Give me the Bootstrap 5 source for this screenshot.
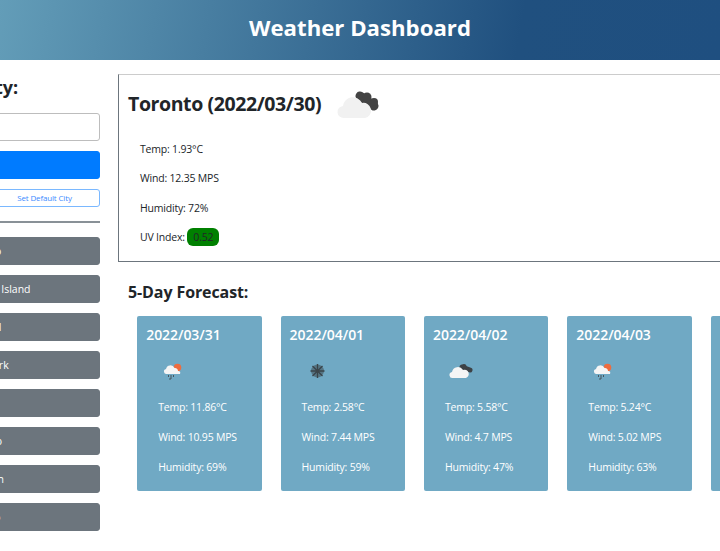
<!DOCTYPE html>
<html lang="en">
<head>
    <meta charset="UTF-8">
    <meta name="viewport" content="width=device-width, initial-scale=1.0">
    <title>Weather Dashboard</title>
    <link href="https://cdn.jsdelivr.net/npm/bootstrap@5.3.2/dist/css/bootstrap.min.css" rel="stylesheet">
    <style>
        html, body { overflow: hidden; height: 551px; }
        body { font-family: "Open Sans", "Noto Sans", sans-serif; color: #212529; font-size: 10.5px; letter-spacing: -.2px; }
        .top-bar { height: 60px; padding-bottom: 4px; background: linear-gradient(100deg, #639db8 0%, #20507f 72%, #1f4f80 100%); color: #fff; }
        .top-bar h1 { font-size: 22.2px; font-weight: 700; margin: 0; letter-spacing: 0; }
        .page-wrap { width: 1000px; margin-left: -100px; padding-top: 14px; }
        .side-col { width: 200px; flex: none; margin-right: 18px; }
        .side-col h2 { font-size: 18px; font-weight: 700; margin: 2px 0 14px -100px; padding-right: 82px; line-height: 23px; letter-spacing: -.1px; white-space: nowrap; text-align: right; }
        .city-input { height: 28px; border-radius: 3px; border-color: #bdbdbd; margin-bottom: 10px; }
        .search-btn { height: 28px; background: #007bff; border-color: #007bff; color: #fff; font-size: 10.5px; padding: 0 0 0 63px; margin-bottom: 10px; display: block; width: 100%; border-radius: 3px; text-align: left; }
        .default-btn { height: 18px; font-size: 8px; letter-spacing: -.15px; padding: 0 0 0 89px; color: #3d8bff; border-color: #7ab8ff; border-radius: 3px; display: block; width: 100%; }
        .side-col hr { margin: 14px 0 14px; border-top: 2px solid #6c757d; opacity: .8; }
        .city-btn { height: 28px; font-size: 10.5px; padding: 2px 0 0 61px; display: block; width: 100%; margin-bottom: 10px; background: #6c757d; border-color: #6c757d; border-radius: 3px; text-align: left; }
        .today-box { height: 188px; border: 1px solid #6c757d; border-top-color: #ccc; padding: 15px 9px; }
        .today-box h2 { font-size: 19.5px; font-weight: 700; margin: 0; line-height: 27px; letter-spacing: -.4px; }
        .today-head { height: 45px; }
        .today-stat { margin: 0 0 0 12px; height: 29.3px; line-height: 29.3px; }
        .uv-pill { display: inline-block; background: #008000; color: #212529; border-radius: 6px; padding: 0 6px; line-height: 18px; }
        .forecast-title { font-size: 16px; font-weight: 700; margin: 18px 0 12px 10px; line-height: 24px; letter-spacing: -.1px; }
        .forecast-row { margin-left: 19.2px; gap: 19px; }
        .day-card { width: 124.4px; height: 175px; flex: none; background: #70a9c4; color: #fff; border-radius: 2px; padding: 9px; }
        .day-card h3 { font-size: 14px; font-weight: 600; margin: 0; line-height: 20px; letter-spacing: -.05px; }
        .day-card svg { display: block; margin: 15px 0 0 14px; }
        .day-stats { margin-top: 8px; }
        .day-stat { margin: 0 0 0 12px; height: 30px; line-height: 30px; }
    </style>
</head>
<body>
    <header class="top-bar d-flex align-items-center justify-content-center">
        <h1>Weather Dashboard</h1>
    </header>

    <div class="page-wrap d-flex">
        <aside class="side-col">
            <h2>Search for a City:</h2>
            <input type="text" class="form-control city-input">
            <button class="btn search-btn">Search</button>
            <button class="btn btn-outline-primary default-btn">Set Default City</button>
            <hr>
            <button class="btn btn-secondary city-btn">Toronto</button>
            <button class="btn btn-secondary city-btn">Norfolk Island</button>
            <button class="btn btn-secondary city-btn">Istanbul</button>
            <button class="btn btn-secondary city-btn">New York</button>
            <button class="btn btn-secondary city-btn">Paris</button>
            <button class="btn btn-secondary city-btn">Orlando</button>
            <button class="btn btn-secondary city-btn">Houston</button>
            <button class="btn btn-secondary city-btn">Chicago</button>
        </aside>

        <main class="flex-grow-1">
            <section class="today-box">
                <div class="today-head d-flex align-items-start gap-3">
                    <h2>Toronto (2022/03/30)</h2>
                    <svg width="44" height="30" viewBox="0 0 44 30">
                        <path d="M23 6L37 16" stroke="#434343" stroke-width="9" stroke-linecap="round"/>
                        <circle cx="30" cy="7" r="4.500" fill="#434343"/>
                        <circle cx="37" cy="12" r="4" fill="#434343"/>
                        <path d="M7 28a6 6 0 0 1-1-12a10 10 0 0 1 19-3a7 7 0 0 1 3 15z" fill="#f1f1f1"/>
                    </svg>
                </div>
                <p class="today-stat">Temp: 1.93°C</p>
                <p class="today-stat">Wind: 12.35 MPS</p>
                <p class="today-stat">Humidity: 72%</p>
                <p class="today-stat">UV Index: <span class="uv-pill">0.52</span></p>
            </section>

            <h2 class="forecast-title">5-Day Forecast:</h2>
            <div class="forecast-row d-flex">
                <div class="day-card">
                    <h3>2022/03/31</h3>
                    <svg width="24" height="24" viewBox="0 0 24 24">
                        <circle cx="17.500" cy="7.500" r="3.800" fill="#ee6c3e"/>
                        <path d="M7 14a2.500 2.500 0 0 1-1-5a4.500 4.500 0 0 1 8.500-1a3 3 0 0 1 3.500 3a2 2 0 0 1 2 3z" fill="#f5f5f5"/>
                        <path d="M8.500 15v2M11 15v4M13.500 15v2M10 18v2" stroke="#47555c" stroke-width="1"/>
                    </svg>
                    <div class="day-stats">
                        <p class="day-stat">Temp: 11.86°C</p>
                        <p class="day-stat">Wind: 10.95 MPS</p>
                        <p class="day-stat">Humidity: 69%</p>
                    </div>
                </div>
                <div class="day-card">
                    <h3>2022/04/01</h3>
                    <svg width="24" height="24" viewBox="0 0 24 24">
                        <circle cx="13.500" cy="11" r="6.500" fill="#3f4a50" opacity=".55"/>
                        <path d="M13.500 4v14M6.500 11h14M8.500 6l10 10M18.500 6l-10 10" stroke="#3a4449" stroke-width="1.300"/>
                    </svg>
                    <div class="day-stats">
                        <p class="day-stat">Temp: 2.58°C</p>
                        <p class="day-stat">Wind: 7.44 MPS</p>
                        <p class="day-stat">Humidity: 59%</p>
                    </div>
                </div>
                <div class="day-card">
                    <h3>2022/04/02</h3>
                    <svg width="28" height="24" viewBox="0 0 28 24">
                        <path d="M15 7L23 10" stroke="#3d4246" stroke-width="5" stroke-linecap="round"/>
                        <circle cx="17" cy="6.500" r="2.500" fill="#3d4246"/>
                        <path d="M6 18a3 3 0 0 1-1-6a6 6 0 0 1 11-2a4 4 0 0 1 3 8z" fill="#f5f5f5"/>
                    </svg>
                    <div class="day-stats">
                        <p class="day-stat">Temp: 5.58°C</p>
                        <p class="day-stat">Wind: 4.7 MPS</p>
                        <p class="day-stat">Humidity: 47%</p>
                    </div>
                </div>
                <div class="day-card">
                    <h3>2022/04/03</h3>
                    <svg width="24" height="24" viewBox="0 0 24 24">
                        <circle cx="17.500" cy="7.500" r="3.800" fill="#ee6c3e"/>
                        <path d="M7 14a2.500 2.500 0 0 1-1-5a4.500 4.500 0 0 1 8.500-1a3 3 0 0 1 3.500 3a2 2 0 0 1 2 3z" fill="#f5f5f5"/>
                        <path d="M8.500 15v2M11 15v4M13.500 15v2M10 18v2" stroke="#47555c" stroke-width="1"/>
                    </svg>
                    <div class="day-stats">
                        <p class="day-stat">Temp: 5.24°C</p>
                        <p class="day-stat">Wind: 5.02 MPS</p>
                        <p class="day-stat">Humidity: 63%</p>
                    </div>
                </div>
                <div class="day-card"></div>
            </div>
        </main>
    </div>

    <script src="https://cdn.jsdelivr.net/npm/bootstrap@5.3.2/dist/js/bootstrap.bundle.min.js"></script>
</body>
</html>
